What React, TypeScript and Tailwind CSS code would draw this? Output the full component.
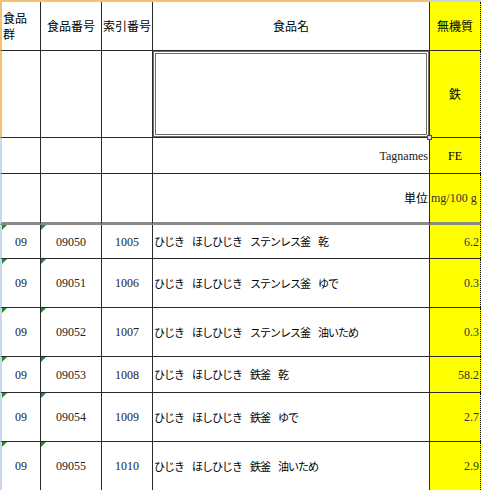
import React from "react";

const goth = "font-['Noto_Sans_CJK_JP',sans-serif]";
const serif = "font-['Liberation_Serif',serif]";
const cols = "grid grid-cols-[41px_61px_51px_277px_51px]";
const line = "border-[#2a2a2a]";

function Tri() {
  return (
    <span className="absolute left-0 top-0 h-0 w-0 border-r-[5px] border-t-[5px] border-r-transparent border-t-[#1f8a2e]" />
  );
}

type Row = { g: string; n: string; i: string; name: string[]; v: string; h: string };

const rows: Row[] = [
  { g: "09", n: "09050", i: "1005", name: ["ひじき", "ほしひじき", "ステンレス釜", "乾"], v: "6.2", h: "h-[34px]" },
  { g: "09", n: "09051", i: "1006", name: ["ひじき", "ほしひじき", "ステンレス釜", "ゆで"], v: "0.3", h: "h-[49px]" },
  { g: "09", n: "09052", i: "1007", name: ["ひじき", "ほしひじき", "ステンレス釜", "油いため"], v: "0.3", h: "h-[49px]" },
  { g: "09", n: "09053", i: "1008", name: ["ひじき", "ほしひじき", "鉄釜", "乾"], v: "58.2", h: "h-[36px]" },
  { g: "09", n: "09054", i: "1009", name: ["ひじき", "ほしひじき", "鉄釜", "ゆで"], v: "2.7", h: "h-[49px]" },
  { g: "09", n: "09055", i: "1010", name: ["ひじき", "ほしひじき", "鉄釜", "油いため"], v: "2.9", h: "h-[49px]" },
];

export default function App() {
  const cell = `border-r border-b ${line} flex items-center`;
  return (
    <div className="w-[481px] h-[490px] overflow-hidden bg-white text-black">
      {/* top strip */}
      <div className={cols + " h-[2px]"}>
        <div className="col-span-4 bg-[#f3c173]" />
        <div className="bg-[#c9d3e3]" />
      </div>
      {/* header row */}
      <div className={cols + " h-[49px] text-[12px] " + goth}>
        <div className={`${cell} border-l-2 border-l-[#f3c173] pl-[1px]`}>
          <div className="flex flex-col leading-[16px]">
            <span>食品</span>
            <span>群</span>
          </div>
        </div>
        <div className={`${cell} justify-center`}>食品番号</div>
        <div className={`${cell} justify-center`}>索引番号</div>
        <div className={`${cell} justify-center`}>食品名</div>
        <div className={`${cell} justify-center bg-[#ffff00] border-r-0`}>
          <span className="flex-1 text-center">無機質</span>
          <span className="h-full border-r border-dotted border-black" />
        </div>
      </div>
      {/* box row */}
      <div className={cols + " h-[87px] text-[12px] " + goth}>
        <div className={`${cell} border-l-2 border-l-[#f3c173]`} />
        <div className={cell} />
        <div className={cell} />
        <div className="relative border-b border-r border-[#2a2a2a] bg-white">
          <div className="absolute inset-0 border-[3px] border-double border-[#6e6e6e]" />
          <span className="absolute -bottom-[3px] -right-[3px] h-[5px] w-[5px] border border-[#3b4d8a] bg-[#d8e0f0]" />
        </div>
        <div className={`${cell} bg-[#ffff00] border-r-0`}>
          <span className="flex-1 text-center">鉄</span>
          <span className="h-full border-r border-dotted border-black" />
        </div>
      </div>
      {/* tagnames row */}
      <div className={cols + " h-[36px] text-[12px]"}>
        <div className={`${cell} border-l-2 border-l-[#c9d8ec]`} />
        <div className={cell} />
        <div className={cell} />
        <div className={`${cell} justify-end pr-[1px] ${serif} text-[#222]`}>Tagnames</div>
        <div className={`${cell} bg-[#ffff00] border-r-0 ${serif}`}>
          <span className="flex-1 text-center">FE</span>
          <span className="h-full border-r border-dotted border-black" />
        </div>
      </div>
      {/* unit row */}
      <div className={cols + " h-[51px] text-[12px]"}>
        <div className={`border-r border-b-[3px] border-b-[#8a8a8a] ${line} border-l-2 border-l-[#c9d8ec]`} />
        <div className={`border-r border-b-[3px] border-b-[#8a8a8a] ${line}`} />
        <div className={`border-r border-b-[3px] border-b-[#8a8a8a] ${line}`} />
        <div className={`border-r border-b-[3px] border-b-[#8a8a8a] ${line} flex items-center justify-end pr-[1px] ${goth}`}>単位</div>
        <div className={`border-b-[3px] border-b-[#8a8a8a] bg-[#ffff00] flex items-center ${serif}`}>
          <span className="flex-1 pl-[1px] text-left whitespace-nowrap text-[#333]">mg/100 g</span>
          <span className="h-full border-r border-dotted border-black" />
        </div>
      </div>
      {/* data rows */}
      {rows.map((r) => (
        <div key={r.n} className={`${cols} ${r.h} text-[12px]`}>
          <div className={`${cell} relative justify-center border-l-2 border-l-[#c9d8ec] ${serif} text-[#222]`}>
            <Tri />
            {r.g}
          </div>
          <div className={`${cell} relative justify-center ${serif} text-[#222]`}>
            <Tri />
            {r.n}
          </div>
          <div className={`${cell} justify-center ${serif} text-[#222]`}>{r.i}</div>
          <div className={`${cell} gap-[8px] pl-[1px] ${goth} text-[11px] tracking-[-1px] whitespace-nowrap`}>
            {r.name.map((w, k) => (
              <span key={k}>{w}</span>
            ))}
          </div>
          <div className={`${cell} bg-[#ffff00] border-r-0 ${serif}`}>
            <span className="flex-1 pr-[1px] text-right text-[#333]">{r.v}</span>
            <span className="h-full border-r border-dotted border-black" />
          </div>
        </div>
      ))}
    </div>
  );
}
